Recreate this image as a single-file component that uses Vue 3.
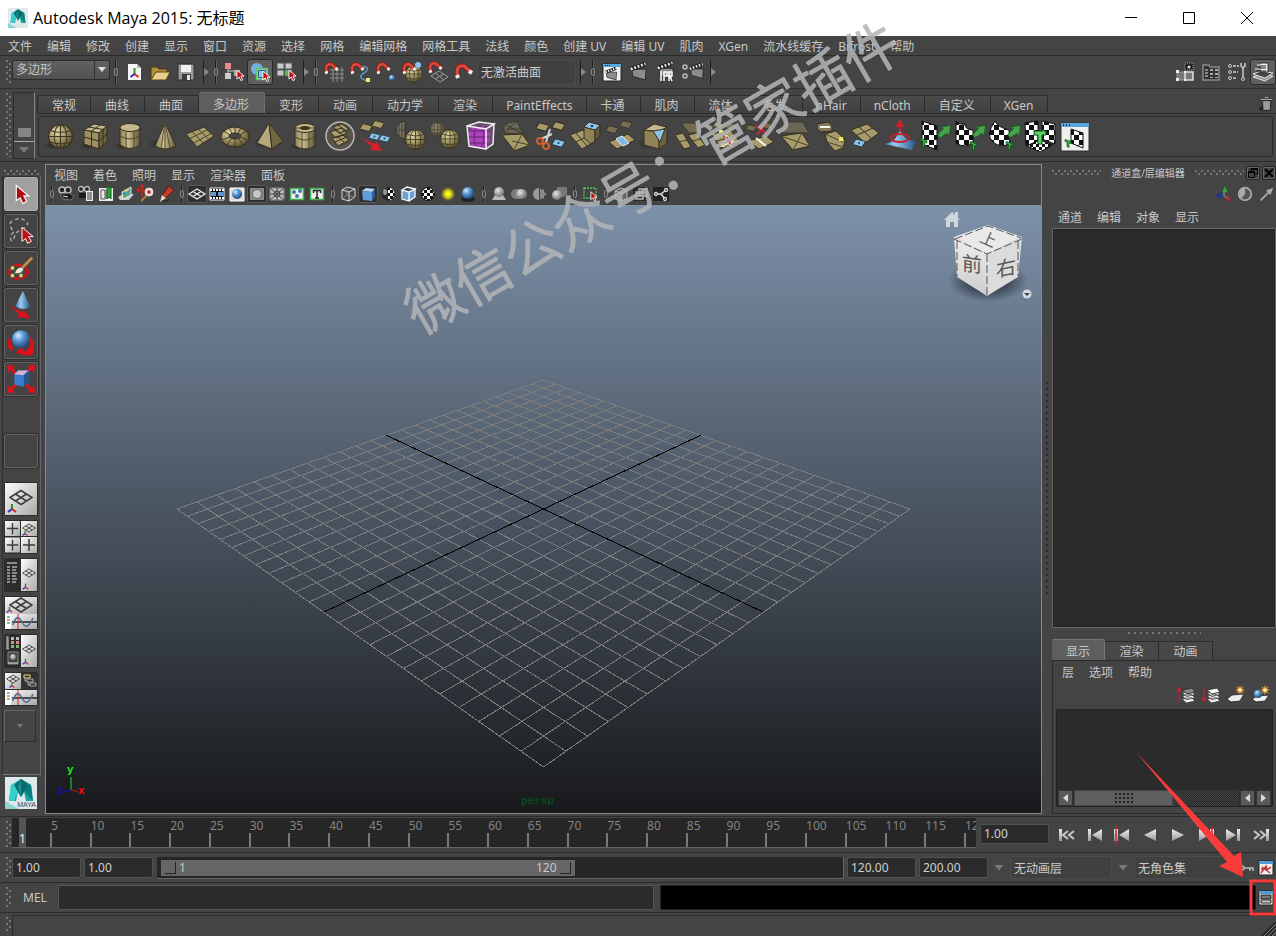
<script setup>
import { ref } from 'vue'

const mainMenu = ['文件', '编辑', '修改', '创建', '显示', '窗口', '资源', '选择', '网格', '编辑网格', '网格工具', '法线', '颜色', '创建 UV', '编辑 UV', '肌肉', 'XGen', '流水线缓存', 'Bifrost', '帮助']
const shelfTabs = ['常规', '曲线', '曲面', '多边形', '变形', '动画', '动力学', '渲染', 'PaintEffects', '卡通', '肌肉', '流体', '毛发', 'nHair', 'nCloth', '自定义', 'XGen']
const isLatin = (s) => /^[A-Za-z]+$/.test(s)
const activeShelf = ref('多边形')
const shelfIcons = ['sphere', 'cube', 'cylinder', 'cone', 'plane', 'torus', 'pyramid', 'pipe', 'combine', 'extract', 'half', 'mirror', 'smooth', 'fold', 'scissors', 'extrude', 'bridge', 'fill', 'append', 'split', 'collapse', 'triangulate', 'bevel', 'merge', 'sculpt', 'uvplanar', 'uvcyl', 'uvsph', 'uvauto', 'uvedit']

const statusGroups = [
  { kind: 'sep' },
  { kind: 'icons', list: ['new', 'open', 'save'] },
  { kind: 'more' }, { kind: 'sep' },
  { kind: 'icons', list: ['selhier', 'selobj', 'selcomp'], active: 'selobj' },
  { kind: 'more' }, { kind: 'sep' },
  { kind: 'icons', list: ['snapgrid', 'snapcurve', 'snappoint', 'snapproj', 'snapplane', 'magnet'] },
  { kind: 'field' },
  { kind: 'more' }, { kind: 'sep' },
  { kind: 'icons', list: ['renderview', 'clap', 'ipr', 'rset'], wide: true },
  { kind: 'more' }
]
const rightToggles = ['modelkit', 'attred', 'toolset', 'chanbox']

const tools = ['t-select', 't-lasso', 't-paint', 't-move', 't-rotate', 't-scale']
const layouts = ['l-single', 'l-four', 'l-outliner', 'l-graph', 'l-hyper', 'l-multi']

const panelMenu = ['视图', '着色', '照明', '显示', '渲染器', '面板']
const panelGroups = [
  ['p-cam', 'p-camattr', 'p-book', 'p-image', 'p-zoom', 'p-pencil'],
  ['p-grid', 'p-film', 'p-res', 'p-gate', 'p-chart', 'p-action', 'p-title'],
  ['p-wire', 'p-shade', 'p-tex', 'p-wos', 'p-check', 'p-light', 'p-ball'],
  ['p-shadow', 'p-blur', 'p-occ', 'p-aa'],
  ['p-isolate'],
  ['p-xray', 'p-xbox', 'p-joint']
]
const panelActive = ['p-grid', 'p-gate', 'p-shade']

const channelMenu = ['通道', '编辑', '对象', '显示']
const layerTabs = ['显示', '渲染', '动画']
const activeLayer = ref('显示')
const layerMenu = ['层', '选项', '帮助']
const layerIcons = ['y-up', 'y-down', 'y-new', 'y-newsel']

const frames = Array.from({ length: 24 }, (_, i) => (i + 1) * 5)
const playIcons = ['k-start', 'k-prev', 'k-prevkey', 'k-back', 'k-play', 'k-nextkey', 'k-next', 'k-end']

const mode = ref('多边形')
const current = ref('1.00')
const animStart = ref('1.00')
const playStart = ref('1.00')
const playEnd = ref('120.00')
const animEnd = ref('200.00')
const surface = ref('无激活曲面')
const animLayer = ref('无动画层')
const charSet = ref('无角色集')
const command = ref('')

/* Ground grid: project a point of the unit square to the view plane. */
function project(x, z) {
  const w = 1 - (x + z) / 6
  return [497.5 + (183.25 * (x - z)) / w, -212 + 516 / w]
}
function line(x1, z1, x2, z2) {
  const a = project(x1, z1)
  const b = project(x2, z2)
  return `M${a[0].toFixed(1)} ${a[1].toFixed(1)}L${b[0].toFixed(1)} ${b[1].toFixed(1)}`
}
const divisions = 24
let gridPath = ''
for (let i = 0; i <= divisions; i++) {
  const v = (2 * i) / divisions - 1
  if (i !== divisions / 2) gridPath += line(v, -1, v, 1) + line(-1, v, 1, v)
}
const axisPath = line(0, -1, 0, 1) + line(-1, 0, 1, 0)
</script>

<template>
  <div class="app">
    <svg class="defs" width="0" height="0" aria-hidden="true">
      <defs>
        <radialGradient id="gk" cx=".35" cy=".3" r=".8"><stop offset="0" stop-color="#e6dcb0" /><stop offset=".5" stop-color="#9d9061" /><stop offset="1" stop-color="#4b4326" /></radialGradient>
        <linearGradient id="gl" x1="0" x2="1"><stop offset="0" stop-color="#8a7f52" /><stop offset=".4" stop-color="#c9be90" /><stop offset="1" stop-color="#5f5534" /></linearGradient>
        <radialGradient id="gb" cx=".35" cy=".3" r=".75"><stop offset="0" stop-color="#d5ecff" /><stop offset=".4" stop-color="#5c9ad4" /><stop offset="1" stop-color="#1c3f70" /></radialGradient>
        <linearGradient id="gbl" x1="0" x2="1"><stop offset="0" stop-color="#3b76b4" /><stop offset=".35" stop-color="#9ccbf0" /><stop offset="1" stop-color="#225488" /></linearGradient>
        <radialGradient id="gw" cx=".4" cy=".35" r=".7"><stop offset="0" stop-color="#e4e4e4" /><stop offset="1" stop-color="#6c6c6c" /></radialGradient>
        <radialGradient id="gy"><stop offset=".15" stop-color="#ffff20" /><stop offset=".55" stop-color="#b8b21c" /><stop offset="1" stop-color="#444444" stop-opacity="0" /></radialGradient>
        <radialGradient id="gs"><stop offset="0" stop-color="#202020" stop-opacity=".8" /><stop offset="1" stop-color="#202020" stop-opacity="0" /></radialGradient>
        <linearGradient id="gp" x1="0" y1="0" x2="1" y2="1"><stop offset="0" stop-color="#fdfdfd" /><stop offset="1" stop-color="#a9a9a9" /></linearGradient>
        <linearGradient id="gplay" x1="0" y1="0" x2="0" y2="1"><stop offset="0" stop-color="#eeeeee" /><stop offset="1" stop-color="#999999" /></linearGradient>
        <pattern id="chk" width="10" height="10" patternUnits="userSpaceOnUse"><rect width="10" height="10" fill="#fff" /><path d="M0 0h5v5H0zM5 5h5v5H5z" fill="#111" /></pattern>
        <pattern id="chks" width="6" height="6" patternUnits="userSpaceOnUse"><rect width="6" height="6" fill="#fff" /><path d="M0 0h3v3H0zM3 3h3v3H3z" fill="#111" /></pattern>
      </defs>

      <symbol id="cursor" viewBox="0 0 10 14"><path d="M1 1v10l2.500-2.300 2 4 2-1-2-4H9z" fill="#c01018" stroke="#fff" stroke-width="1" /></symbol>
      <symbol id="ball" viewBox="0 0 24 24"><circle cx="12" cy="12" r="11.300" fill="url(#gk)" stroke="#352f1c" /><path d="M12 1v22M1 12h22M3 6.500q9 3 18 0M3 17.500q9 3 18 0" fill="none" stroke="#3e3720" /><ellipse cx="12" cy="12" rx="6" ry="11" fill="none" stroke="#3e3720" /></symbol>
      <symbol id="tile" viewBox="0 0 14 9"><path d="M4 .5 13.500 3 10 8.500.5 6z" fill="#a79b6c" stroke="#38321e" /></symbol>
      <symbol id="dimtile" viewBox="0 0 14 9"><path d="M4 .5 13.500 3 10 8.500.5 6z" fill="#776f52" stroke="#38342a" /></symbol>
      <symbol id="bluetile" viewBox="0 0 14 9"><path d="M4 .5 13.500 3 10 8.500.5 6z" fill="#8fc3e6" stroke="#283c48" /><circle cx="7" cy="4.500" r="1" fill="#174060" /></symbol>

      <!-- Shelf -->
      <symbol id="s-sphere" viewBox="0 0 32 32"><ellipse cx="10" cy="25" rx="10" ry="5" fill="url(#gs)" /><use href="#ball" x="4" y="4" width="25" height="25" /></symbol>
      <symbol id="s-cube" viewBox="0 0 32 32"><ellipse cx="9" cy="25" rx="9" ry="5" fill="url(#gs)" /><g stroke="#352f1c"><path d="M5 10 15 4l13 2-8 7z" fill="#c3b98d" /><path d="M5 10l15 3v16L5 24z" fill="#9c9062" /><path d="M20 13l8-7v16l-8 7z" fill="#6d6340" /><path d="M12.500 11.500V26M5 17l15 4 8-7M10 7l14 2.500V26M21 5l-9 6.500" fill="none" /></g></symbol>
      <symbol id="s-cylinder" viewBox="0 0 32 32"><ellipse cx="9" cy="26" rx="9" ry="4" fill="url(#gs)" /><path d="M6 8v17q10 7 20 0V8z" fill="url(#gl)" stroke="#352f1c" /><ellipse cx="16" cy="7.500" rx="10" ry="4" fill="#c3b98d" stroke="#352f1c" /><path d="M6 16q10 6 20 0M12 12v17M20 12v17" fill="none" stroke="#4d4427" /></symbol>
      <symbol id="s-cone" viewBox="0 0 32 32"><ellipse cx="9" cy="24" rx="10" ry="5" fill="url(#gs)" /><path d="M16 3 6 26q10 6 21 0z" fill="url(#gl)" stroke="#352f1c" /><path d="M16 3l-4 25M16 3l5 25M16 3v26" stroke="#5a5030" /></symbol>
      <symbol id="s-plane" viewBox="0 0 32 32"><path d="M2 14 20 7l10 9-17 11z" fill="#a79b6c" stroke="#352f1c" /><path d="M8 11.500 19 23M14 9l11 10.500M6 18.500 23 10M10 23l17-9.500" stroke="#4b4328" fill="none" /></symbol>
      <symbol id="s-torus" viewBox="0 0 32 32"><path fill-rule="evenodd" d="M2 17a14 10 0 1 0 28 0 14 10 0 1 0-28 0M10 16a6 3 0 1 0 12 0 6 3 0 1 0-12 0" fill="url(#gk)" stroke="#352f1c" /><path d="M5 11l6 4M27 11l-6 4M16 7v6M16 19v8M3 20l8-3M29 20l-8-3M8 25l4-6M24 25l-4-6M10 8l3 5M22 8l-3 5" stroke="#453d23" /></symbol>
      <symbol id="s-pyramid" viewBox="0 0 32 32"><ellipse cx="8" cy="23" rx="9" ry="5" fill="url(#gs)" /><path d="M15 3 3 23l15 6z" fill="#b5aa7c" stroke="#352f1c" /><path d="M15 3l3 26 11-8z" fill="#71663f" stroke="#352f1c" /></symbol>
      <symbol id="s-pipe" viewBox="0 0 32 32"><ellipse cx="9" cy="26" rx="9" ry="4" fill="url(#gs)" /><path d="M6 8v18q10 6 20 0V8z" fill="url(#gl)" stroke="#352f1c" /><ellipse cx="16" cy="8" rx="10" ry="4.500" fill="#c3b98d" stroke="#352f1c" /><ellipse cx="16" cy="8" rx="5" ry="2" fill="#3c3520" /><path d="M6 17q10 6 20 0M13 12v17M20 12v17M6 8h5M21 8h5" fill="none" stroke="#4d4427" /></symbol>
      <symbol id="s-combine" viewBox="0 0 32 32"><circle cx="16" cy="16" r="14" fill="#57534a" stroke="#b5b5b5" stroke-width="1.500" /><g fill="#a79b6c" stroke="#352f1c"><path d="M8 18l11-3 6 5-11 6zM6 12l11-4 6 5-11 5zM9 7l9-3 7 5-9 4z" /><path d="M13 16l7 6M11 10l8 5M14 5l7 5M11 22l12-5" fill="none" /></g></symbol>
      <symbol id="s-extract" viewBox="0 0 32 32"><use href="#tile" x="0" y="3" width="14" height="9" /><use href="#tile" x="12" y="0" width="14" height="9" /><use href="#bluetile" x="9" y="12" width="13" height="9" /><use href="#bluetile" x="19" y="14" width="13" height="9" /><path d="M3 18l13 6 2-3 5 10-12-1 2-3z" fill="#d3202c" /></symbol>
      <symbol id="s-half" viewBox="0 0 32 32"><path d="M11 1a9 9 0 0 0 0 18z" fill="#77715c" stroke="#35322a" /><path d="M2 10h9M5 3v14M8 2v16" stroke="#47443a" /><use href="#ball" x="11" y="9" width="21" height="21" /></symbol>
      <symbol id="s-mirror" viewBox="0 0 32 32"><g opacity=".55"><use href="#ball" x="1" y="2" width="15" height="15" /></g><use href="#ball" x="11" y="9" width="20" height="20" /></symbol>
      <symbol id="s-smooth" viewBox="0 0 32 32"><circle cx="15" cy="17" r="11" fill="#a22bb0" /><ellipse cx="15" cy="17" rx="5" ry="11" fill="none" stroke="#3b0c44" /><path d="M4 17h22M5 11h20M6 23h18" stroke="#3b0c44" /><path d="M3 6l12-4 15 2-8 5zM3 6l19 3v20L5 26zM22 9l8-5-1 20-7 5" fill="#d080e0" fill-opacity=".25" stroke="#f2eaf5" stroke-width="1.500" /></symbol>
      <symbol id="s-fold" viewBox="0 0 32 32"><path d="M5 4l13-3 6 13-19-1z" fill="#6b6757" stroke="#3b382e" /><path d="M5 4l19 10M18 1 5 13M8 9h13" stroke="#3b382e" /><path d="M3 15l20-1 8 11-16 6z" fill="#a79b6c" stroke="#352f1c" /><path d="M3 15l12 15 8-16M31 25l-18-4" stroke="#4b4328" fill="none" /></symbol>
      <symbol id="s-scissors" viewBox="0 0 32 32"><use href="#tile" x="1" y="2" width="15" height="10" /><use href="#tile" x="17" y="1" width="15" height="10" /><use href="#bluetile" x="17" y="17" width="15" height="12" /><path d="M16 9l-4 13M7 19l11-5" stroke="#d5d5d5" stroke-width="2" /><circle cx="6" cy="21" r="3" fill="none" stroke="#d0602c" stroke-width="2" /><circle cx="12" cy="26" r="3" fill="none" stroke="#d0602c" stroke-width="2" /></symbol>
      <symbol id="s-extrude" viewBox="0 0 32 32"><g stroke="#352f1c"><path d="M1 15l13-5 11 12-12 7z" fill="#a79b6c" /><path d="M7 13l11 13M7 22l12-6" /><path d="M15 7l11 3v11l-4 3-7-6z" fill="#8f8357" /><path d="M26 10l5-5v11l-5 5z" fill="#655b39" /><path d="M15 7l5-5 11 3-5 5z" fill="#8fc3e6" /></g><circle cx="23" cy="6" r="1.300" fill="#174060" /></symbol>
      <symbol id="s-bridge" viewBox="0 0 32 32"><use href="#dimtile" x="1" y="5" width="14" height="9" /><use href="#dimtile" x="15" y="0" width="14" height="9" /><path d="M5 22l19-8 7 6-18 9z" fill="#a79b6c" stroke="#352f1c" /><path d="M12 19l6-3 7 7-6 3z" fill="#7fb9e0" stroke="#e8f4fb" /></symbol>
      <symbol id="s-fill" viewBox="0 0 32 32"><ellipse cx="8" cy="24" rx="9" ry="5" fill="url(#gs)" /><g stroke="#352f1c"><path d="M5 10l10-6 13 3-8 5z" fill="#c3b98d" /><path d="M5 10l15 2v17L5 25z" fill="#8f8357" /><path d="M20 12l8-5v16l-8 6z" fill="#6d6340" /><path d="M14 11l12-2-5 13z" fill="#8fc3e6" /></g></symbol>
      <symbol id="s-append" viewBox="0 0 32 32"><path d="M7 3h14l8 10H15z" fill="#746c50" stroke="#3a372d" /><path d="M1 15l8-2 8 14-7 2zM14 15l8-2 9 12-7 3z" fill="#a79b6c" stroke="#352f1c" /><path d="M5 22l8-2M18 21l9-2" stroke="#4b4328" /></symbol>
      <symbol id="s-split" viewBox="0 0 32 32"><use href="#dimtile" x="2" y="1" width="14" height="9" /><use href="#dimtile" x="16" y="2" width="14" height="9" /><path d="M2 14l19-4 10 12-18 6z" fill="#a79b6c" stroke="#352f1c" /><path d="M12 12l9 13M7 21l20-5" stroke="#4b4328" /><path d="M10 10h4v3h-4zM12 24h4v3h-4z" fill="#f1ea78" /><use href="#cursor" x="16" y="14" width="10" height="14" /></symbol>
      <symbol id="s-collapse" viewBox="0 0 32 32"><use href="#dimtile" x="1" y="4" width="12" height="8" /><use href="#dimtile" x="18" y="2" width="12" height="8" /><path d="M4 21l18-5 8 6-15 7z" fill="#a79b6c" stroke="#352f1c" /><path d="M12 18l10 8" stroke="#f4f4ee" stroke-width="2" /><path d="M11 5l12 9M22 3l-9 12" stroke="#cc2630" stroke-width="2" /></symbol>
      <symbol id="s-triangulate" viewBox="0 0 32 32"><path d="M8 2h16l6 11H2z" fill="#6b6757" stroke="#3b382e" /><path d="M2 16l21-3 8 13-17 4z" fill="#a79b6c" stroke="#352f1c" /><path d="M2 16l29 10M23 13l-9 17" stroke="#4b4328" /></symbol>
      <symbol id="s-bevel" viewBox="0 0 32 32"><path d="M3 4l11-2 4 3v6L7 12 3 9z" fill="#817753" stroke="#352f1c" /><path d="M6 7h10" stroke="#f4f4f0" stroke-width="2" /><path d="M11 14l11-3 9 9-2 8-8 3-8-9z" fill="#a79b6c" stroke="#352f1c" /><path d="M11 14l18 8M13 22l16 5" stroke="#4b4328" /><path d="M25 17h4v4h-4z" fill="#f1ea50" /></symbol>
      <symbol id="s-merge" viewBox="0 0 32 32"><path d="M2 10l16-6 12 9-14 10z" fill="#a79b6c" stroke="#352f1c" /><path d="M10 7l12 11M8 15l16-7" stroke="#352f1c" /><use href="#bluetile" x="3" y="18" width="14" height="10" /></symbol>
      <symbol id="s-sculpt" viewBox="0 0 32 32"><path d="M0 24q12-1 16-15 4 13 16 12l-4 9z" fill="url(#gbl)" /><ellipse cx="16" cy="18" rx="9" ry="4" fill="none" stroke="#c8202c" stroke-width="2" /><path d="M16 12V4M13 6l3-5 3 5z" stroke="#c8202c" stroke-width="2" fill="#c8202c" /></symbol>
      <symbol id="gt" viewBox="0 0 8 10"><path d="M1 1l6 2v2L5 4.500V9L3 8V3.500L1 3z" fill="#30b440" stroke="#0d4a17" stroke-width=".7" /></symbol>
      <symbol id="ga" viewBox="0 0 12 12"><path d="M1 9l5-5-3-1 9-2-1 9-2-2-6 4z" fill="#43a44c" stroke="#1a5a22" stroke-width=".7" /></symbol>
      <symbol id="s-uvplanar" viewBox="0 0 32 32"><path d="M3 1l15 5v24L3 24z" fill="url(#chk)" stroke="#111" /><use href="#ga" x="17" y="4" width="15" height="14" /><use href="#gt" x="0" y="17" width="9" height="12" /></symbol>
      <symbol id="s-uvcyl" viewBox="0 0 32 32"><path d="M2 1q3 4 9 3 0 6 8 6v13q-8 6-17 0z" fill="url(#chk)" stroke="#111" /><use href="#ga" x="17" y="4" width="15" height="14" /><use href="#gt" x="15" y="20" width="9" height="12" /></symbol>
      <symbol id="s-uvsph" viewBox="0 0 32 32"><path d="M6 1q2 6 14 9l1 13q-9 6-17-1T6 1z" fill="url(#chk)" stroke="#111" /><use href="#ga" x="17" y="4" width="15" height="14" /><use href="#gt" x="16" y="20" width="9" height="12" /></symbol>
      <symbol id="s-uvauto" viewBox="0 0 32 32"><path d="M1 3l13-2v20L2 26zM18 1l13 3v20l-13-5z" fill="url(#chk)" stroke="#111" /><path d="M3 26l13-6 13 5-13 7z" fill="url(#chks)" stroke="#111" /><path d="M10 11l12 0v4h-4v9h-4v-9h-4z" fill="#5bd468" stroke="#0d4a17" /></symbol>
      <symbol id="s-uvedit" viewBox="0 0 32 32"><path d="M2 3h28v28H2z" fill="#efefef" stroke="#2c2c2c" /><path d="M2 3h28v4H2z" fill="#5aa7dc" /><path d="M4 5h1M7 5h1M10 5h1" stroke="#124" stroke-width="1.500" /><path d="M12 9l12 4v15l-12-5z" fill="url(#chk)" stroke="#111" /><use href="#gt" x="5" y="18" width="8" height="11" /></symbol>

      <!-- Status line -->
      <symbol id="i-new" viewBox="0 0 24 24"><path d="M6 4h9l4 4v12H6z" fill="#f4f4f4" /><path d="M15 4v4h4z" fill="#bbb" /><path d="M12.500 14V8" stroke="#1b9a2f" stroke-width="2" /><path d="M12.500 14l-4 3" stroke="#2233c8" stroke-width="2" /><path d="M12.500 14l4 3" stroke="#d22" stroke-width="2" /></symbol>
      <symbol id="i-open" viewBox="0 0 24 24"><path d="M3 7h6l2 2h8v4H8l-5 7z" fill="#b48d3d" stroke="#4a3712" /><path d="M8 12h14l-4 8H3z" fill="#e7cf88" stroke="#5d4719" /></symbol>
      <symbol id="i-save" viewBox="0 0 24 24"><path d="M4 4h15l1 1v15H4z" fill="#9b9b9b" stroke="#2f2f2f" /><path d="M7 5h10v7H7z" fill="#f0f0f0" /><path d="M8 14h9v6H8z" fill="#3d3d3d" /><path d="M13 15h3v5h-3z" fill="#e6e6e6" /></symbol>
      <symbol id="i-selhier" viewBox="0 0 24 24"><path d="M3 3h6v6H3z" fill="#e88" /><path d="M3 13h6v6H3z" fill="#ccc" /><path d="M12 10h6v6h-6z" fill="#aaa" /><path d="M6 9v4M6 11h6" stroke="#ccc" /><use href="#cursor" x="14" y="9" width="9" height="13" /></symbol>
      <symbol id="i-selobj" viewBox="0 0 24 24"><circle cx="9" cy="9" r="6" fill="#73b0dd" /><path d="M8.500 8.500h11v11h-11z" fill="#8fc4e8" stroke="#62c462" stroke-width="1.500" /><path d="M10.500 10.500h7v7h-7z" fill="none" stroke="#315f86" /><use href="#cursor" x="14" y="10" width="9" height="13" /></symbol>
      <symbol id="i-selcomp" viewBox="0 0 24 24"><path d="M3 3h7v6H3zM11 3h7v6h-7zM3 10h7v6H3z" fill="#c8c8c8" stroke="#555" /><path d="M11 10h7v6h-7z" fill="#54b95a" /><use href="#cursor" x="14" y="9" width="9" height="13" /></symbol>
      <symbol id="mag" viewBox="0 0 18 18"><path d="M3 14 2 9Q2 2 9 3l7 6" fill="none" stroke="#8d1712" stroke-width="5" /><path d="M3 14 2 9Q2 2 9 3l7 6" fill="none" stroke="#e04a3c" stroke-width="3" /><path d="M2 12l1 3M14 8l3 2" stroke="#eee" stroke-width="4" /></symbol>
      <symbol id="i-snapgrid" viewBox="0 0 24 24"><path d="M8 10h14M8 14h14M8 18h14M11 7v15M15 7v15M20 7v15" stroke="#8c8c8c" /><use href="#mag" x="2" y="2" width="15" height="14" /></symbol>
      <symbol id="i-snapcurve" viewBox="0 0 24 24"><path d="M14 6q10 2 2 7t4 8" fill="none" stroke="#5e96c8" stroke-width="1.500" /><path d="M18 18h4v4h-4z" fill="#f1ea78" /><use href="#mag" x="2" y="2" width="15" height="14" /></symbol>
      <symbol id="i-snappoint" viewBox="0 0 24 24"><circle cx="18" cy="18" r="3" fill="url(#gb)" /><use href="#mag" x="2" y="2" width="15" height="14" /></symbol>
      <symbol id="i-snapproj" viewBox="0 0 24 24"><use href="#ball" x="5" y="5" width="18" height="18" /><use href="#mag" x="2" y="2" width="15" height="14" /><circle cx="18" cy="5" r="3" fill="#8ac4ee" /></symbol>
      <symbol id="i-snapplane" viewBox="0 0 24 24"><path d="M5 16l8-5 9 6-8 5zM9 13l9 7M9 19l9-5" fill="none" stroke="#9a9a9a" /><use href="#mag" x="2" y="1" width="15" height="14" /></symbol>
      <symbol id="i-magnet" viewBox="0 0 24 24"><use href="#mag" x="3" y="3" width="18" height="18" /></symbol>
      <symbol id="clapper" viewBox="0 0 20 20"><path d="M2 8h16l-1 12-14-4z" fill="#8b8b8b" stroke="#222" /><path d="M1 8 17 2" stroke="#222" stroke-width="5" /><path d="M1 8 17 2" stroke="#eee" stroke-width="3" stroke-dasharray="2 2" /></symbol>
      <symbol id="i-renderview" viewBox="0 0 24 24"><path d="M3 4h18v17H3z" fill="#f0f0f0" stroke="#222" /><path d="M3 4h18v3H3z" fill="#5aa7dc" /><path d="M5 5.500h5" stroke="#124" stroke-dasharray="1 1" /><use href="#clapper" x="5" y="7" width="13" height="13" /></symbol>
      <symbol id="i-clap" viewBox="0 0 24 24"><use href="#clapper" x="3" y="1" width="18" height="20" /></symbol>
      <symbol id="i-ipr" viewBox="0 0 24 24"><use href="#clapper" x="3" y="0" width="18" height="20" /><path d="M7 11v10M10 21v-9h3v4h-3M15 21v-9h3v4h-2l2 5" fill="none" stroke="#fff" stroke-width="1.500" /></symbol>
      <symbol id="i-rset" viewBox="0 0 24 24"><use href="#clapper" x="8" y="1" width="16" height="19" /><circle cx="4" cy="7" r="2" fill="none" stroke="#bbb" stroke-width="1.500" /><circle cx="4" cy="16" r="2" fill="none" stroke="#bbb" stroke-width="1.500" /></symbol>
      <symbol id="i-modelkit" viewBox="0 0 24 24"><path d="M12 3h8v7h-8z" fill="#222" stroke="#999" stroke-dasharray="1 1" /><circle cx="16" cy="7" r="1.500" fill="#ddd" /><path d="M4 12h8v8H4z" fill="#777" stroke="#999" /><path d="M12 12h8v8h-8z" fill="#777" stroke="#ddd" stroke-width="1.500" /><path d="M3 10h3v3H3zM3 18h3v3H3zM11 11h2v2h-2zM11 19h2v2h-2z" fill="#eee" /></symbol>
      <symbol id="i-attred" viewBox="0 0 24 24"><path d="M4 5h6l1 2h9v13H4z" fill="#333" stroke="#8a8a8a" stroke-width="1.500" /><path d="M6 10h3M6 13h3M6 16h3" stroke="#ddd" /><path d="M11 9h3v2h-3zM16 9h3v2h-3zM11 13h3v2h-3zM16 13h3v2h-3zM11 17h3v1h-3zM16 17h3v1h-3z" fill="#aaa" /></symbol>
      <symbol id="i-toolset" viewBox="0 0 24 24"><g fill="none" stroke="#ccc"><circle cx="5" cy="6" r="1.500" /><circle cx="5" cy="12" r="1.500" /><circle cx="5" cy="18" r="1.500" /><path d="M8 6h6M8 12h5M8 18h4" stroke-width="1.500" stroke-dasharray="3 1" /><path d="M18 8v10M16 3v3l2 2 2-2V3" stroke-width="1.500" /><circle cx="18" cy="19" r="1.500" /></g></symbol>
      <symbol id="i-chanbox" viewBox="0 0 24 24"><path d="M2 17l8-3 12 2-8 5z" fill="#999" stroke="#ddd" /><path d="M2 14l8-3 12 2-8 5z" fill="#444" stroke="#ddd" /><path d="M9 3h8v9H9z" fill="#eee" stroke="#333" /><path d="M8 6h7M6 8h9M5 11h10" stroke="#222" /><path d="M6 5h4M4 9h5" stroke="#fff" /></symbol>

      <!-- Toolbox -->
      <symbol id="t-select" viewBox="0 0 34 34"><path d="M12 8v16l4-3 3 6 4-2-3-6h5z" fill="#b00c14" stroke="#fff" stroke-width="1.200" /></symbol>
      <symbol id="t-lasso" viewBox="0 0 34 34"><path d="M8 16Q3 9 8 6q8-4 14 0 5 4-2 8-10 4-10 10-2 6-4 2 0-6 4-8" fill="none" stroke="#a8a8a8" stroke-width="1.500" stroke-dasharray="4 3" /><path d="M18 13v15l4-3 2 5 4-2-3-5h5z" fill="#c01018" stroke="#fff" /></symbol>
      <symbol id="t-paint" viewBox="0 0 34 34"><ellipse cx="14" cy="21" rx="10" ry="7" fill="none" stroke="#c8141c" stroke-width="3" /><path d="M17 18 29 6" stroke="#7b5730" stroke-width="4" /><path d="M18 17 29 6" stroke="#c99a5a" stroke-width="2" /><path d="M10 23q2-7 8-7l2 2q-2 6-10 5z" fill="#efe9d2" stroke="#555" /><path d="M6 15h4v4H6zM6 23h4v4H6zM15 23h4v4h-4z" fill="#f1ea78" stroke="#554" /></symbol>
      <symbol id="t-move" viewBox="0 0 34 34"><path d="M19 2 11 18q7 6 16 1z" fill="url(#gbl)" /><path d="M4 16l14 9 2-3 7 9-14-1 2-3z" fill="#dd1018" /></symbol>
      <symbol id="t-rotate" viewBox="0 0 34 34"><path d="M6 14q-4 7 2 11M26 13q7 8-2 13" fill="none" stroke="#d81018" stroke-width="4" /><circle cx="17" cy="14" r="9.500" fill="url(#gb)" /><path d="M26 24q-3 3-7 3v-4l-8 5 9 3h8q3-2 3-7z" fill="#e41018" /></symbol>
      <symbol id="t-scale" viewBox="0 0 34 34"><path d="M6 5l22 24M28 5 6 29" stroke="#e01018" stroke-width="3" /><path d="M2 2l9 1-3 2-3 3-2 3zM32 2l-1 9-2-3-3-3-3-2zM2 32l1-9 2 3 3 3 3 2zM32 32l-9-1 3-2 3-3 2-3z" fill="#e01018" /><path d="M10 12l4-4h11v12l-5 5-10-2z" fill="#3b7ed0" /><path d="M10 12l4-4h11l-5 5z" fill="#d3b3cf" /><path d="M20 13l5-5v12l-5 5z" fill="#23528e" /></symbol>
      <symbol id="gridic" viewBox="0 0 24 16"><path d="M1 8l11-7 11 7-11 7zM6.500 4.500l11 7M17.500 4.500l-11 7" fill="none" stroke="#3d3d3d" stroke-width="1.500" /></symbol>
      <symbol id="tri" viewBox="0 0 10 10"><path d="M5 6V1" stroke="#1b8f2c" stroke-width="2" /><path d="M5 6 1 9" stroke="#2233c8" stroke-width="2" /><path d="M5 6l4 3" stroke="#d22" stroke-width="2" /></symbol>
      <symbol id="plus" viewBox="0 0 16 16"><path d="M0 0h16v16H0z" fill="url(#gp)" /><path d="M8 2v12M2 8h12" stroke="#3a3a3a" stroke-width="1.500" /></symbol>
      <symbol id="curve" viewBox="0 0 32 15"><path d="M0 0h32v15H0z" fill="url(#gp)" /><path d="M0 0h6v15H0z" fill="#fff" /><path d="M2 3h3" stroke="#1a7a2a" /><path d="M2 6h3" stroke="#c22" /><path d="M2 9h3" stroke="#1a7a2a" /><path d="M7 8h25" stroke="#222" stroke-width="1.500" /><path d="M8 11Q12-2 17 8t11-4" fill="none" stroke="#4a6c96" stroke-width="1.500" /><path d="M13 0v15" stroke="#d22" /></symbol>
      <symbol id="l-single" viewBox="0 0 34 34"><path d="M1 1h32v32H1z" fill="url(#gp)" /><use href="#gridic" x="5" y="7" width="24" height="17" /><use href="#tri" x="3" y="21" width="10" height="10" /></symbol>
      <symbol id="l-four" viewBox="0 0 34 34"><use href="#plus" x="1" y="1" width="15" height="15" /><path d="M17 1h16v15H17z" fill="url(#gp)" /><use href="#gridic" x="18" y="3" width="14" height="10" /><use href="#tri" x="18" y="10" width="6" height="6" /><use href="#plus" x="1" y="17" width="15" height="16" /><use href="#plus" x="17" y="17" width="16" height="16" /></symbol>
      <symbol id="l-outliner" viewBox="0 0 34 34"><path d="M1 1h16v32H1z" fill="#2c2c2c" /><path d="M17 1h16v32H17z" fill="url(#gp)" /><path d="M3 5h10M3 9h3M3 12h3M3 15h3M3 18h3M3 21h3M3 24h3M8 9h5M8 12h4M8 15h5M8 18h4M8 21h5M8 24h4" stroke="#eee" /><use href="#gridic" x="18" y="10" width="14" height="10" /><use href="#tri" x="18" y="25" width="7" height="7" /></symbol>
      <symbol id="l-graph" viewBox="0 0 34 34"><path d="M1 1h32v17H1z" fill="url(#gp)" /><use href="#gridic" x="5" y="1" width="24" height="16" /><use href="#tri" x="2" y="10" width="7" height="7" /><use href="#curve" x="1" y="18" width="32" height="15" /></symbol>
      <symbol id="l-hyper" viewBox="0 0 34 34"><path d="M1 1h16v32H1z" fill="#2c2c2c" /><path d="M17 1h16v32H17z" fill="url(#gp)" /><path d="M2 2h3v14H2z" fill="#999" stroke="#333" stroke-dasharray="1 1" /><path d="M7 3h3v3H7zM12 3h3v3h-3z" fill="#bbb" /><path d="M7 7h3v3H7zM12 7h3v3h-3z" fill="#d88" /><path d="M7 11h3v3H7zM12 11h3v3h-3z" fill="#7b7" /><path d="M4 18h10v12H4z" fill="#444" stroke="#888" /><circle cx="9" cy="23" r="3" fill="url(#gw)" /><path d="M4 29h10" stroke="#ddd" /><use href="#gridic" x="18" y="10" width="14" height="10" /><use href="#tri" x="18" y="24" width="7" height="7" /></symbol>
      <symbol id="l-multi" viewBox="0 0 34 34"><path d="M1 1h16v16H1z" fill="url(#gp)" /><use href="#gridic" x="2" y="2" width="14" height="10" /><use href="#tri" x="5" y="10" width="6" height="6" /><path d="M17 1h16v16H17z" fill="#333" /><path d="M20 3h6v3h-6z" fill="none" stroke="#e9dc70" /><path d="M23 7h6v3h-6zM26 11h6v3h-6zM21 6v3h2M24 10v3h2" fill="none" stroke="#aaa" /><use href="#curve" x="1" y="18" width="32" height="15" /></symbol>
      <symbol id="maya" viewBox="0 0 32 32"><path d="M0 0h32v32H0z" fill="#dfe8ea" /><path d="M0 24 14 32H0z" fill="#8fd3d3" /><path d="M4 24 6 8l10-6 10 6 2 16h-7l-2-9-3 5-3-5-2 9z" fill="#1aa6a0" /><path d="M6 8l10-6-3 13-4 9H4z" fill="#35d0ca" /><path d="M16 2l10 6 2 16-7-7z" fill="#0b7f80" /><path d="M16 2 9 8l7 12 7-12z" fill="#0a6a6d" /><path d="M16 2l-3 8 3 10z" fill="#17928f" /></symbol>

      <!-- Panel toolbar -->
      <symbol id="p-cam" viewBox="0 0 20 20"><circle cx="6" cy="6" r="3" fill="#222" stroke="#bbb" stroke-width="1.500" /><circle cx="12" cy="6" r="3" fill="#222" stroke="#bbb" stroke-width="1.500" /><path d="M4 10l9-1 5 3-3 4-8-1z" fill="#1c1c1c" stroke="#777" /><path d="M7 12l5 1" stroke="#ddd" /></symbol>
      <symbol id="p-camattr" viewBox="0 0 20 20"><circle cx="5" cy="5" r="2.500" fill="#222" stroke="#bbb" stroke-width="1.300" /><circle cx="11" cy="5" r="2.500" fill="#222" stroke="#bbb" stroke-width="1.300" /><path d="M3 9h7v5H3z" fill="#1c1c1c" /><path d="M10 7h7v10h-7z" fill="#eee" /><path d="M11 9h5M11 11h5M11 13h5M11 15h5" stroke="#333" /></symbol>
      <symbol id="p-book" viewBox="0 0 20 20"><path d="M3 4h14v13H3z" fill="#ececec" /><path d="M5 6h4v9H5zM10 6v9" fill="none" stroke="#555" /><path d="M11 3h4v12l-2-2-2 2z" fill="#2fa13a" stroke="#145a1c" /></symbol>
      <symbol id="p-image" viewBox="0 0 20 20"><path d="M2 13l5-3h11l-5 6H4z" fill="#ccc" /><path d="M6 8l9-5v8l-8 4z" fill="#3e8be0" stroke="#eee" /><path d="M7 12l7-6v4l-6 4z" fill="#5ab04a" /><path d="M9 6l4-2v2l-4 3z" fill="#e2d14a" /></symbol>
      <symbol id="p-zoom" viewBox="0 0 20 20"><path d="M6 1v12M1 6h12M4 3l2-2 2 2M3 4 1 6l2 2" stroke="#c22" stroke-width="1.500" fill="none" /><path d="M11 11l-6 6" stroke="#b07c3a" stroke-width="2" /><circle cx="13" cy="8" r="4" fill="#f3dede" stroke="#ddd" /><path d="M11 8h4M13 6v4" stroke="#c22" stroke-width="1.500" /></symbol>
      <symbol id="p-pencil" viewBox="0 0 20 20"><path d="M6 11 13 2l5 4-8 8z" fill="#c43a2c" stroke="#5a140f" /><path d="M6 11l4 3-6 4z" fill="#eadcc0" /><path d="M6 17q6 1 8-2" stroke="#222" fill="none" /></symbol>
      <symbol id="p-grid" viewBox="0 0 20 20"><path d="M2 10l8-5 8 5-8 5zM6 7.500l8 5M14 7.500l-8 5" fill="none" stroke="#eee" stroke-width="1.300" /></symbol>
      <symbol id="p-film" viewBox="0 0 20 20"><path d="M3 4h14v12H3z" fill="#111" stroke="#eee" /><path d="M3 6h14M3 14h14" stroke="#fff" stroke-width="2" stroke-dasharray="2 1" /><path d="M4 8h5v4H4zM11 8h5v4h-5z" fill="#5d9bd2" /></symbol>
      <symbol id="p-res" viewBox="0 0 20 20"><path d="M3 4h14v13H3z" fill="#ddd" stroke="#fff" /><circle cx="10" cy="10" r="5" fill="url(#gb)" /></symbol>
      <symbol id="p-gate" viewBox="0 0 20 20"><path d="M3 4h14v12H3z" fill="#888" /><circle cx="10" cy="10" r="4.500" fill="#c8c8c8" stroke="#666" /></symbol>
      <symbol id="p-chart" viewBox="0 0 20 20"><path d="M3 4h14v12H3z" fill="#bbb" stroke="#888" /><path d="M3 4l14 12M17 4 3 16M10 4v12M3 10h14" stroke="#444" /><circle cx="10" cy="10" r="3" fill="none" stroke="#444" /></symbol>
      <symbol id="p-action" viewBox="0 0 20 20"><path d="M3.500 4.500h13v11h-13z" fill="#eee" stroke="#3fb14a" stroke-width="1.500" /><circle cx="7" cy="8" r="2" fill="#3d78ad" /><circle cx="13" cy="7" r="2" fill="#3d78ad" /><circle cx="10" cy="12" r="2" fill="#3d78ad" /></symbol>
      <symbol id="p-title" viewBox="0 0 20 20"><path d="M3.500 4.500h13v11h-13z" fill="#eee" stroke="#3fb14a" stroke-width="1.500" /><path d="M6.500 9V6.500h7V9M10 6v8M8 14h4" fill="none" stroke="#222" stroke-width="1.500" /></symbol>
      <symbol id="p-wire" viewBox="0 0 20 20"><path d="M4 6l5-3 8 2v8l-6 4-7-2zM4 6l7 2 6-3M11 8v9" fill="none" stroke="#ddd" /><path d="M9 3v8l-5 4M9 11l8 2" fill="none" stroke="#888" /></symbol>
      <symbol id="p-shade" viewBox="0 0 20 20"><path d="M4 7l4-3 9 1-3 3z" fill="#b7d8f2" /><path d="M4 7l10 1v9l-9-1z" fill="#5f9ddb" /><path d="M14 8l3-3v8l-3 4z" fill="#2c5f98" /></symbol>
      <symbol id="p-tex" viewBox="0 0 20 20"><circle cx="10" cy="10" r="6.500" fill="#2a2a2a" /><path d="M10 3.500a6.500 6.500 0 0 1 0 13z" fill="url(#chks)" /><ellipse cx="7" cy="8" rx="2" ry="3" fill="#999" /></symbol>
      <symbol id="p-wos" viewBox="0 0 20 20"><path d="M4 6l7 2v9l-6-2zM11 8l6-3v8l-6 4z" fill="#6aa0d8" /><path d="M4 6l5-3 8 2-6 3zM4 6l7 2v9l-7-2zM11 8l6-3v8l-6 4" fill="none" stroke="#fff" stroke-width="1.300" /></symbol>
      <symbol id="p-check" viewBox="0 0 20 20"><circle cx="10" cy="10" r="6.500" fill="url(#chks)" stroke="#111" /></symbol>
      <symbol id="p-light" viewBox="0 0 20 20"><circle cx="10" cy="10" r="8" fill="url(#gy)" /></symbol>
      <symbol id="p-ball" viewBox="0 0 20 20"><ellipse cx="10" cy="15" rx="7" ry="3" fill="#222" /><circle cx="10" cy="9" r="6" fill="url(#gb)" /></symbol>
      <symbol id="p-shadow" viewBox="0 0 20 20"><path d="M3 16l3-5h8l3 5z" fill="#bbb" /><circle cx="10" cy="8" r="5" fill="url(#gw)" /></symbol>
      <symbol id="p-blur" viewBox="0 0 20 20"><rect x="2" y="5" width="16" height="10" rx="5" fill="#7c7c7c" /><circle cx="12" cy="10" r="5" fill="url(#gw)" /></symbol>
      <symbol id="p-occ" viewBox="0 0 20 20"><path d="M10 4v12a6 6 0 0 1 0-12z" fill="#999" /><path d="M11 4l2 2 2-1v3l3 2-3 2v3l-2-1-2 2z" fill="#888" /></symbol>
      <symbol id="p-aa" viewBox="0 0 20 20"><path d="M8 3h10v8l-3 2H8z" fill="#777" /><circle cx="8" cy="11" r="5" fill="url(#gw)" /></symbol>
      <symbol id="p-isolate" viewBox="0 0 20 20"><path d="M4 4h12v10H4z" fill="none" stroke="#4ec455" stroke-width="1.300" stroke-dasharray="2 1" /><use href="#cursor" x="10" y="7" width="8" height="11" /></symbol>
      <symbol id="p-xray" viewBox="0 0 20 20"><path d="M4 7l6-3 6 2v8l-5 3-7-2zM4 7l7 2 5-3M11 9v8" fill="#666" stroke="#bbb" /></symbol>
      <symbol id="p-xbox" viewBox="0 0 20 20"><path d="M2 3h16v14H2z" fill="#2b2b2b" /><path d="M5 8h7v7H5zM8 5h8v7H8z" fill="none" stroke="#bbb" stroke-width="1.300" /></symbol>
      <symbol id="p-joint" viewBox="0 0 20 20"><path d="M2 3h16v14H2z" fill="#222" /><path d="M5 10h5l5-4M10 10l4 5" stroke="#ddd" stroke-width="1.500" fill="none" /><g fill="#222" stroke="#ddd" stroke-width="1.300"><circle cx="5" cy="10" r="1.500" /><circle cx="15" cy="6" r="1.500" /><circle cx="14" cy="15" r="1.500" /></g></symbol>

      <!-- Layer editor -->
      <symbol id="stack" viewBox="0 0 14 16"><path d="M1 12l9-1 3 3-8 2zM1 9l9-1 3 3-8 2zM1 6l9-1 3 3-8 2z" fill="#f4f4f4" stroke="#333" stroke-width=".7" /></symbol>
      <symbol id="y-up" viewBox="0 0 20 20"><path d="M3 17V5M1 6l2-4 2 4z" stroke="#c8202c" fill="#c8202c" /><use href="#stack" x="5" y="1" width="15" height="17" /><path d="M6 5l10-2 3 4-8 2z" fill="#888" stroke="#333" /></symbol>
      <symbol id="y-down" viewBox="0 0 20 20"><path d="M3 2v12M1 13l2 4 2-4z" stroke="#c8202c" fill="#c8202c" /><use href="#stack" x="5" y="1" width="15" height="17" /><path d="M6 5l10-2 3 4-8 2z" fill="#fff" stroke="#333" /></symbol>
      <symbol id="star" viewBox="0 0 10 10"><path d="M5 0l1 3 3-2-2 3 3 1-3 1 2 3-3-2-1 3-1-3-3 2 2-3-3-1 3-1-2-3 3 2z" fill="#f0a33a" /><circle cx="5" cy="5" r="1.500" fill="#fff6d0" /></symbol>
      <symbol id="y-new" viewBox="0 0 20 20"><path d="M1 14l5-4 12-1-4 7-9 1z" fill="#eee" stroke="#333" /><use href="#star" x="9" y="0" width="10" height="10" /></symbol>
      <symbol id="y-newsel" viewBox="0 0 20 20"><path d="M1 14l5-3 12-1-4 6-9 1z" fill="#eee" stroke="#333" /><circle cx="7" cy="9" r="4" fill="url(#gb)" /><use href="#star" x="9" y="0" width="10" height="10" /></symbol>

      <!-- Playback -->
      <symbol id="k-start" viewBox="0 0 20 20"><path d="M2 4h3v12H2z" fill="url(#gplay)" /><path d="M11 6l-5 4 5 4M17 6l-5 4 5 4" fill="none" stroke="#c8c8c8" stroke-width="2" /></symbol>
      <symbol id="k-prev" viewBox="0 0 20 20"><path d="M3 4h3v12H3zM17 4v12L7 10z" fill="url(#gplay)" /></symbol>
      <symbol id="k-prevkey" viewBox="0 0 20 20"><path d="M2 4h4v12H2zM17 4v12L7 10z" fill="url(#gplay)" /><path d="M4 1v18" stroke="#c8202c" stroke-width="1.500" /></symbol>
      <symbol id="k-back" viewBox="0 0 20 20"><path d="M16 4v12L4 10z" fill="url(#gplay)" /></symbol>
      <symbol id="k-play" viewBox="0 0 20 20"><path d="M4 4v12l12-6z" fill="url(#gplay)" /></symbol>
      <symbol id="k-nextkey" viewBox="0 0 20 20"><path d="M14 4h4v12h-4zM3 4v12l10-6z" fill="url(#gplay)" /><path d="M16 1v18" stroke="#c8202c" stroke-width="1.500" /></symbol>
      <symbol id="k-next" viewBox="0 0 20 20"><path d="M14 4h3v12h-3zM3 4v12l10-6z" fill="url(#gplay)" /></symbol>
      <symbol id="k-end" viewBox="0 0 20 20"><path d="M15 4h3v12h-3z" fill="url(#gplay)" /><path d="M3 6l5 4-5 4M9 6l5 4-5 4" fill="none" stroke="#c8c8c8" stroke-width="2" /></symbol>
      <symbol id="win" viewBox="0 0 16 16"><path d="M1 1h14v14H1z" fill="#f2f2f2" stroke="#222" /><path d="M1 1h14v3H1z" fill="#4f9ed8" /></symbol>
    </svg>

    <header class="titlebar">
      <svg class="title-logo"><use href="#maya" /></svg>
      <h1>Autodesk Maya 2015: 无标题</h1>
      <div class="win-buttons">
        <button type="button" aria-label="最小化"><svg viewBox="0 0 12 12"><path d="M0 5.500h12" /></svg></button>
        <button type="button" aria-label="最大化"><svg viewBox="0 0 12 12"><path d="M.5.500h11v11H.5z" /></svg></button>
        <button type="button" aria-label="关闭"><svg viewBox="0 0 12 12"><path d="M0 0l12 12M12 0 0 12" /></svg></button>
      </div>
    </header>

    <nav class="menu main-menu">
      <button v-for="m in mainMenu" :key="m" type="button">{{ m }}</button>
    </nav>

    <section class="status-line">
      <span class="grip"></span>
      <div class="mode">
        <select v-model="mode" aria-label="菜单集">
          <option>多边形</option><option>动画</option><option>曲面</option>
        </select>
      </div>
      <template v-for="(g, i) in statusGroups" :key="i">
        <span v-if="g.kind === 'sep'" class="sep"></span>
        <span v-else-if="g.kind === 'more'" class="more"></span>
        <input v-else-if="g.kind === 'field'" v-model="surface" class="flat-field surface" aria-label="激活曲面" />
        <div v-else class="icons" :class="{ wide: g.wide }">
          <button v-for="n in g.list" :key="n" type="button" :class="{ on: g.active === n }" :aria-label="n"><svg><use :href="'#i-' + n" /></svg></button>
        </div>
      </template>
      <div class="icons right">
        <button v-for="n in rightToggles" :key="n" type="button" :class="{ on: n === 'chanbox' }" :aria-label="n"><svg><use :href="'#i-' + n" /></svg></button>
      </div>
    </section>

    <section class="shelf">
      <span class="grip"></span>
      <div class="shelf-side">
        <button type="button" aria-label="工具架标签"><i class="square"></i></button>
        <button type="button" aria-label="工具架菜单"><i class="hollow-tri"></i></button>
      </div>
      <div class="shelf-main">
        <div class="tab-row">
          <button v-for="t in shelfTabs" :key="t" type="button" :class="{ on: t === activeShelf, latin: isLatin(t) }" @click="activeShelf = t">{{ t }}</button>
          <button type="button" class="trash" aria-label="删除"><svg viewBox="0 0 14 16"><ellipse cx="4" cy="13" rx="4" ry="2" fill="#222" /><path d="M3 5h9l-1 10H4z" fill="#888" stroke="#222" /><path d="M2 4h11M6 2h3M6 6v8M8 6v8M10 6v8" stroke="#aaa" /></svg></button>
        </div>
        <div class="shelf-body">
          <button v-for="n in shelfIcons" :key="n" type="button" :aria-label="n"><svg><use :href="'#s-' + n" /></svg></button>
        </div>
      </div>
    </section>

    <main class="workspace">
      <aside class="toolbox">
        <span class="hgrip"></span>
        <div class="tool-frame">
          <button v-for="t in tools" :key="t" type="button" class="tool" :class="{ on: t === 't-select' }" :aria-label="t"><svg><use :href="'#' + t" /></svg></button>
          <button type="button" class="tool last-tool" aria-label="上次使用的工具"></button>
          <button v-for="l in layouts" :key="l" type="button" class="layout" :aria-label="l"><svg><use :href="'#' + l" /></svg></button>
          <button type="button" class="layout-menu" aria-label="布局菜单"><i class="hollow-tri small"></i></button>
        </div>
        <div class="maya-badge"><svg><use href="#maya" /></svg><span>MAYA</span></div>
      </aside>

      <section class="view-panel">
        <nav class="menu panel-menu">
          <button v-for="m in panelMenu" :key="m" type="button">{{ m }}</button>
        </nav>
        <div class="panel-tools">
          <template v-for="(g, i) in panelGroups" :key="i">
            <span class="sep"></span>
            <button v-for="n in g" :key="n" type="button" :class="{ on: panelActive.includes(n) }" :aria-label="n"><svg><use :href="'#' + n" /></svg></button>
          </template>
        </div>
        <div class="viewport">
          <svg class="scene" viewBox="0 0 995 608" preserveAspectRatio="xMidYMid meet">
            <path :d="gridPath" class="grid-lines" />
            <path :d="axisPath" class="axis-lines" />
            <text x="475" y="599" class="cam-name">persp</text>
          </svg>
          <svg class="axis-mark" viewBox="0 0 34 34">
            <path d="M17 26V13" stroke="#19e619" /><path d="M17 26l7 2" stroke="#e00" /><path d="M17 26l-8 2" stroke="#11c" />
            <text x="13" y="9" fill="#19f019">y</text><text x="24" y="30" fill="#f01010">x</text><text x="3" y="30" fill="#1010d0">z</text>
          </svg>
          <svg class="view-cube" viewBox="0 0 100 100">
            <defs>
              <radialGradient id="cs"><stop offset=".5" stop-color="#28323e" stop-opacity=".7" /><stop offset="1" stop-color="#28323e" stop-opacity="0" /></radialGradient>
              <linearGradient id="cl" x1="0" y1="0" x2="0" y2="1"><stop offset="0" stop-color="#eeeeee" /><stop offset="1" stop-color="#cdcdcd" /></linearGradient>
            </defs>
            <path d="M3 15l8-8 3 3V7h3v6l2 2h-2v7h-4v-5H9v5H5v-7z" fill="#cdd5de" />
            <ellipse cx="47" cy="76" rx="40" ry="21" fill="url(#cs)" />
            <path d="M13 32 47 20l34 12-35 17z" fill="#e9e9e9" />
            <path d="M13 32l33 17v42L16 72z" fill="url(#cl)" />
            <path d="M46 49l35-17-4 40-31 19z" fill="#dcdcdc" />
            <path d="M13 34 46 49l35-15M46 49v42M14 34 47 21l33 12M16 36v35M77 36v35" fill="none" stroke="#555" stroke-dasharray="8 3" />
            <g class="cube-text">
              <text x="21" y="66" transform="skewY(8) translate(0 -4)">前</text>
              <text x="55" y="71" transform="skewY(-12) translate(0 13)">右</text>
              <text x="39" y="40" class="top-face" transform="rotate(24 47 35)">上</text>
            </g>
            <circle cx="86" cy="89" r="4.500" fill="#d3d9e0" /><path d="M83 88h6l-3 3z" fill="#444" />
          </svg>
        </div>
      </section>

      <span class="splitter"></span>

      <aside class="side">
        <div class="side-title">
          <span class="hgrip"></span><h2>通道盒/层编辑器</h2><span class="hgrip"></span>
          <button type="button" aria-label="浮动"><svg viewBox="0 0 12 12"><path d="M4 4V1.500h6.500V7H8M1.500 4.500h6v6h-6z" /><path d="M1 5h7M4 2h7" stroke-width="2" /></svg></button>
          <button type="button" aria-label="关闭面板"><svg viewBox="0 0 12 12"><path d="M2 2l8 8M10 2l-8 8" stroke-width="2" /></svg></button>
        </div>
        <div class="side-icons">
          <button type="button" aria-label="操纵器"><svg viewBox="0 0 20 20"><path d="M10 12V6" stroke="#aaa" /><path d="M11 1l3 7H8z" fill="#2fae3a" /><path d="M0 12l7-4v7z" fill="#20309c" /><path d="M10 12l4 3" stroke="#aaa" /><path d="M18 18l-6-2 3-4z" fill="#c8262c" /></svg></button>
          <button type="button" aria-label="速度"><svg viewBox="0 0 20 20"><circle cx="10" cy="10" r="7" fill="#555" stroke="#aaa" stroke-width="2" /><path d="M10 3v7l-4 5A7 7 0 0 1 10 3" fill="#aaa" /></svg></button>
          <button type="button" aria-label="曲线"><svg viewBox="0 0 20 20"><path d="M4 17 14 7" stroke="#aaa" stroke-width="2" /><path d="M18 3l-8 3 5 5z" fill="#aaa" /></svg></button>
        </div>
        <nav class="menu channel-menu">
          <button v-for="m in channelMenu" :key="m" type="button">{{ m }}</button>
        </nav>
        <div class="channel-box"></div>
        <span class="hsplit"></span>
        <div class="layer-tabs">
          <button v-for="t in layerTabs" :key="t" type="button" :class="{ on: t === activeLayer }" @click="activeLayer = t">{{ t }}</button>
        </div>
        <div class="layer-frame">
          <nav class="menu layer-menu">
            <button v-for="m in layerMenu" :key="m" type="button">{{ m }}</button>
          </nav>
          <div class="layer-icons">
            <button v-for="n in layerIcons" :key="n" type="button" :aria-label="n"><svg><use :href="'#' + n" /></svg></button>
          </div>
          <div class="layer-list">
            <div class="scrollbar">
              <button type="button" aria-label="向左"><i class="left"></i></button>
              <span class="track"><span class="thumb"></span></span>
              <button type="button" aria-label="向左滚动"><i class="left"></i></button>
              <button type="button" aria-label="向右滚动"><i class="right"></i></button>
            </div>
          </div>
        </div>
      </aside>
    </main>

    <section class="bar time-bar">
      <span class="grip"></span>
      <div class="ruler">
        <span class="now">1</span>
        <span v-for="f in frames" :key="f" class="mark">{{ f }}</span>
      </div>
      <input v-model="current" class="num" aria-label="当前时间" />
      <div class="playback">
        <button v-for="n in playIcons" :key="n" type="button" :aria-label="n"><svg><use :href="'#' + n" /></svg></button>
      </div>
    </section>

    <section class="bar range-bar">
      <span class="grip"></span>
      <input v-model="animStart" class="num" aria-label="动画开始时间" />
      <input v-model="playStart" class="num" aria-label="播放开始时间" />
      <div class="range-track">
        <div class="range-span">
          <button type="button" aria-label="范围开始"></button><span>1</span>
          <span class="end">120</span><button type="button" aria-label="范围结束"></button>
        </div>
      </div>
      <input v-model="playEnd" class="num" aria-label="播放结束时间" />
      <input v-model="animEnd" class="num" aria-label="动画结束时间" />
      <button type="button" class="drop" aria-label="选择动画层"><i class="hollow-tri"></i></button>
      <input v-model="animLayer" class="flat-field" aria-label="动画层" />
      <button type="button" class="drop" aria-label="选择角色集"><i class="hollow-tri"></i></button>
      <input v-model="charSet" class="flat-field" aria-label="角色集" />
      <button type="button" class="end-icon" aria-label="自动关键帧"><svg viewBox="0 0 16 16"><circle cx="4" cy="8" r="2" fill="none" stroke="#bbb" stroke-width="1.500" /><path d="M6 8h9v3M12 8v3" fill="none" stroke="#bbb" stroke-width="1.500" /></svg></button>
      <button type="button" class="end-icon" aria-label="动画首选项"><svg viewBox="0 0 16 16"><use href="#win" width="16" height="16" /><path d="M3 13l3-4 2-3 1 4 4-3M4 7l8 6M3 9h8" fill="none" stroke="#c9303a" stroke-width="1.500" /></svg></button>
    </section>

    <section class="bar command-bar">
      <span class="grip"></span>
      <label for="mel">MEL</label>
      <input id="mel" v-model="command" class="command" />
      <output class="result" aria-label="命令结果"></output>
      <button type="button" class="end-icon" aria-label="脚本编辑器"><svg viewBox="0 0 16 16"><use href="#win" width="16" height="16" /><path d="M3 5h10v4H3z" fill="#777" stroke="#222" /><path d="M3 10h10v3H3z" fill="#ccc" stroke="#222" /></svg></button>
    </section>

    <footer class="help-line">
      <span class="grip"></span>
      <div class="help-box"><svg class="sizer" viewBox="0 0 14 14"><path d="M0 14 14 0M4 14 14 4M8 14l6-6" stroke="#222" stroke-width="1.500" /><path d="M2 14 14 2M6 14l8-8M10 14l4-4" stroke="#777" /></svg></div>
    </footer>

    <svg class="watermark" viewBox="0 0 560 340">
      <text x="280" y="190" text-anchor="middle" transform="rotate(-30 280 170)">微信公众号：管家插件</text>
    </svg>
    <svg class="callout" viewBox="0 0 160 200" aria-hidden="true">
      <path d="M20 16 118 120l7-4 2 25-24-11 8-4z" fill="#fb3a3a" />
      <path d="M135 145h24v33h-24z" fill="none" stroke="#fb3a3a" stroke-width="3" />
    </svg>
  </div>
</template>

<style>
body { background: #444; }
</style>

<style scoped>
.app {
  position: relative;
  display: flex;
  flex-direction: column;
  min-height: 100vh;
  overflow: hidden;
  background: #444;
  color: #c8c8c8;
  font: 12px/16px "Noto Sans", "Noto Sans CJK SC", sans-serif;
}
.app *, .app *::before, .app *::after { box-sizing: border-box; }
.defs { position: absolute; }
button, input, select { font: inherit; color: inherit; margin: 0; padding: 0; border: 0; background: none; border-radius: 0; }
button { display: flex; align-items: center; justify-content: center; flex: none; white-space: nowrap; }
input { min-width: 0; outline: 0; }
h1, h2 { margin: 0; font-weight: 400; }

.titlebar { display: flex; align-items: center; height: 36px; padding-left: 8px; background: #fff; color: #000; }
.title-logo { width: 20px; height: 20px; margin-right: 5px; }
.titlebar h1 { font: 16px/22px "Open Sans", "Noto Sans CJK SC", sans-serif; }
.win-buttons { display: flex; margin-left: auto; }
.win-buttons button { width: 58px; height: 34px; }
.win-buttons svg { width: 12px; height: 12px; overflow: visible; fill: none; stroke: #000; }

.menu { display: flex; gap: 15px; padding-top: 2px; }
.main-menu { height: 20px; padding-left: 8px; border-bottom: 1px solid #2b2b2b; }

.grip {
  flex: none;
  width: 12px;
  align-self: stretch;
  margin: 4px 0;
  background:
    radial-gradient(circle at 7px 1px, #777 0 1px, transparent 1px) 0 0 / 12px 6px,
    radial-gradient(circle at 10px 4px, #777 0 1px, transparent 1px) 0 0 / 12px 6px;
}
.hgrip {
  height: 6px;
  background:
    radial-gradient(circle at 1px 1px, #777 0 1px, transparent 1px) 0 0 / 6px 6px,
    radial-gradient(circle at 4px 4px, #777 0 1px, transparent 1px) 0 0 / 6px 6px;
}
.sep { flex: none; position: relative; width: 11px; height: 24px; }
.sep::before { content: ""; position: absolute; left: 5px; top: 0; width: 2px; height: 100%; border-left: 1px solid #1e1e1e; border-right: 1px solid #5c5c5c; }
.sep::after { content: ""; position: absolute; left: 4px; top: 8px; width: 4px; height: 8px; border: 1px solid #888; border-radius: 2px; background: #444; }
.more { flex: none; position: relative; width: 11px; height: 24px; }
.more::before { content: ""; position: absolute; left: 4px; top: 0; width: 1px; height: 100%; background: #1e1e1e; }
.more::after { content: ""; position: absolute; left: 5px; top: 8px; border-left: 5px solid #888; border-top: 4px solid transparent; border-bottom: 4px solid transparent; }

.status-line { display: flex; align-items: center; height: 33px; border-bottom: 1px solid #303030; }
.mode { position: relative; align-self: flex-start; margin-top: 4px; }
.mode select { display: block; width: 98px; height: 20px; padding-left: 3px; appearance: none; border: 1px solid #2b2b2b; border-radius: 2px; background: linear-gradient(#626262, #505050); }
.mode::after { content: ""; position: absolute; right: 4px; top: 7px; border-top: 5px solid #ddd; border-left: 4px solid transparent; border-right: 4px solid transparent; pointer-events: none; }
.mode::before { content: ""; position: absolute; right: 15px; top: 1px; width: 1px; height: 18px; background: #333; }
.icons { display: flex; }
.icons button { width: 26px; height: 26px; border: 1px solid transparent; border-radius: 3px; }
.icons.wide button { width: 27px; }
.icons svg { width: 24px; height: 24px; }
.icons .on { background: #5f5f5f; border-color: #2a2a2a; }
.icons.right { margin-left: auto; }
.flat-field { height: 25px; padding: 0 3px; border: 1px solid #4c4c4c; border-radius: 2px; background: #404040; color: #ccc; }
.surface { width: 99px; }

.shelf { display: flex; height: 73px; border-bottom: 1px solid #2b2b2b; }
.shelf-side { display: flex; flex-direction: column; justify-content: flex-end; width: 22px; margin: 3px 0 2px 1px; border: 1px solid #2b2b2b; border-right-color: #888; }
.shelf-side button { height: 17px; }
.shelf-side button + button { border-top: 1px solid #aaa; }
.square { width: 13px; height: 9px; border-radius: 1px; background: #858585; }
.hollow-tri { width: 10px; height: 6px; background: #777; clip-path: polygon(0 0, 100% 0, 50% 100%); }
.hollow-tri.small { width: 6px; height: 4px; }
.shelf-main { flex: 1; min-width: 0; margin-left: 2px; }
.tab-row { display: flex; align-items: flex-end; height: 25px; border-bottom: 1px solid #2b2b2b; }
.tab-row button { height: 18px; padding: 2px 15px 0 14px; border-top: 1px solid #2b2b2b; border-right: 1px solid #2b2b2b; background: linear-gradient(#4a4a4a, #404040); }
.tab-row button.latin { padding: 2px 13px 0; }
.tab-row button:first-child { border-left: 1px solid #2b2b2b; padding: 2px 14px 0; border-radius: 3px 0 0 0; }
.tab-row .on { height: 21px; padding-top: 4px; border-radius: 3px 3px 0 0; background: #5e5e5e; border-color: #707070; }
.tab-row .trash { margin-left: auto; padding: 0 3px 0 0; height: 20px; border: 0; background: none; }
.trash svg { width: 14px; height: 17px; }
.shelf-body { display: flex; align-items: center; height: 41px; margin: 2px 3px 0 1px; padding-left: 3px; border: 1px solid #2b2b2b; border-radius: 3px; }
.shelf-body button { width: 35px; }
.shelf-body svg { width: 32px; height: 32px; margin-bottom: 2px; }

.workspace { display: flex; flex: 1; min-height: 0; padding: 2px 0; }
.toolbox { display: flex; flex-direction: column; width: 45px; padding: 0 4px 5px 2px; }
.toolbox .hgrip { margin: 6px 2px 0; }
.tool-frame { flex: 1; display: flex; flex-direction: column; align-items: flex-start; padding: 1px 0 0 1px; border: 1px solid #2e2e2e; border-right-color: #666; border-bottom-color: #777; border-top: 0; }
.tool { width: 34px; height: 34px; margin-bottom: 3px; border: 1px solid #646464; border-radius: 2px; outline: 1px solid #2f2f2f; }
.tool svg { width: 32px; height: 32px; }
.tool.on { background: #a0a0a0; border-color: #b0b0b0; }
.last-tool { margin: 35px 0 14px; }
.layout { width: 34px; height: 34px; margin-bottom: 4px; background: #2c2c2c; border-radius: 2px; }
.layout svg { width: 34px; height: 34px; }
.layout-menu { width: 32px; height: 32px; border: 1px solid #666; border-color: #666 #2e2e2e #2e2e2e #666; }
.maya-badge { position: relative; width: 32px; height: 32px; margin: 2px 0 0 3px; }
.maya-badge svg { display: block; width: 32px; height: 32px; }
.maya-badge span { position: absolute; right: 1px; bottom: 0; color: #444; font: 7px/8px "Liberation Sans", sans-serif; }

.view-panel { flex: 1; min-width: 0; display: flex; flex-direction: column; border: 1px solid #8a8a8a; }
.panel-menu { height: 20px; padding-left: 8px; }
.panel-tools { display: flex; align-items: center; height: 20px; padding-bottom: 2px; }
.panel-tools .sep { height: 16px; }
.panel-tools .sep:first-child { width: 10px; }
.panel-tools .sep::after { top: 4px; }
.panel-tools button { width: 20px; height: 18px; border-radius: 2px; }
.panel-tools svg { width: 20px; height: 20px; }
.panel-tools .on { background: #303030; box-shadow: inset 0 0 0 1px #5a5a5a; }
.viewport { position: relative; flex: 1; min-height: 0; background: linear-gradient(#7d91a9, #18191b); }
.scene { position: absolute; inset: 0; width: 100%; height: 100%; }
.grid-lines { fill: none; stroke: #7c7c7c; shape-rendering: crispEdges; }
.axis-lines { fill: none; stroke: #000; shape-rendering: crispEdges; }
.cam-name { font: bold 11px "Liberation Mono", monospace; fill: #0a4a1e; }
.axis-mark { position: absolute; left: 8px; bottom: 15px; width: 34px; height: 34px; font: bold 11px "Liberation Mono", monospace; }
.view-cube { position: absolute; top: 0; right: 0; width: 100px; height: 100px; }
.cube-text { font: 20px "Noto Sans CJK SC", sans-serif; fill: #5a5a5a; }
.cube-text .top-face { font-size: 16px; }

.splitter { flex: none; width: 10px; background: radial-gradient(circle at 5px 1px, #2b2b2b 0 1px, transparent 1px) 0 218px / 10px 6px; clip-path: inset(218px 0 220px); }
.side { display: flex; flex-direction: column; width: 224px; }
.side-title { display: flex; align-items: center; height: 18px; }
.side-title h2 { margin: 0 10px; font-size: 10px; line-height: 16px; white-space: nowrap; }
.side-title .hgrip { flex: 1; }
.side-title button { width: 14px; height: 14px; margin-left: 2px; border: 1px solid #222; border-radius: 2px; outline: 1px solid #666; outline-offset: -2px; }
.side-title svg { width: 12px; height: 12px; fill: none; stroke: #000; }
.side-icons { display: flex; align-items: center; justify-content: flex-end; height: 24px; }
.side-icons button { width: 21px; }
.side-icons svg { width: 18px; height: 18px; }
.channel-menu { height: 22px; padding-left: 6px; }
.channel-box { flex: 1; border: 1px solid #6a6a6a; border-radius: 1px; background: #2b2b2b; box-shadow: inset 0 0 0 1px #222; }
.hsplit { height: 10px; width: 74px; align-self: center; background: radial-gradient(circle at 2px 5px, #777 0 1px, transparent 1px) 0 0 / 6px 10px; }
.layer-tabs { display: flex; align-items: flex-end; height: 23px; border-bottom: 1px solid #2b2b2b; }
.layer-tabs button { width: 54px; height: 19px; padding-top: 2px; border: 1px solid #2b2b2b; border-left: 0; border-bottom: 0; background: #484848; }
.layer-tabs .on { width: 53px; height: 21px; padding-top: 3px; border-color: #777; border-radius: 2px 2px 0 0; background: #5e5e5e; }
.layer-frame { padding: 0 3px 6px; border: 1px solid #2b2b2b; border-top: 0; border-right: 0; }
.layer-menu { height: 24px; padding: 0 0 0 6px; }
.layer-icons { display: flex; justify-content: flex-end; height: 24px; }
.layer-icons button { width: 25px; height: 20px; }
.layer-icons svg { width: 20px; height: 20px; }
.layer-list { display: flex; flex-direction: column; justify-content: flex-end; height: 98px; padding: 1px 1px 0; border: 1px solid #222; border-radius: 2px; background: #2b2b2b; }
.scrollbar { display: flex; height: 16px; gap: 1px; }
.scrollbar button { width: 15px; background: #5a5a5a; border: 1px solid #333; }
.scrollbar i { border: 4px solid transparent; }
.scrollbar .left { border-right: 5px solid #ddd; border-left: 0; }
.scrollbar .right { border-left: 5px solid #ddd; border-right: 0; }
.track { flex: 1; background: conic-gradient(#2b2b2b 25%, #404040 0 50%, #2b2b2b 0 75%, #404040 0) 0 0 / 2px 2px; }
.thumb { display: flex; align-items: center; justify-content: center; width: 60%; height: 16px; background: #5e5e5e; border: 1px solid #444; }
.thumb::after { content: ""; width: 20px; height: 12px; background: radial-gradient(circle at 2px 2px, #222 0 1px, transparent 1px) 0 0 / 4px 4px; }

.bar { display: flex; align-items: center; border-top: 1px solid #2b2b2b; }
.time-bar { height: 36px; }
.ruler { flex: 1; display: grid; grid-template-columns: 38px repeat(23, minmax(0, 1fr)) 12px; height: 30px; margin-bottom: 3px; background: #262626; border-bottom: 1px solid #666; color: #838383; }
.mark { position: relative; padding-left: 1px; line-height: 16px; white-space: nowrap; }
.mark:last-child { overflow-x: clip; }
.mark::after { content: ""; position: absolute; left: 0; bottom: 0; width: 2px; height: 14px; background: #777; }
.now { display: flex; align-items: flex-end; width: 7px; height: 29px; margin-left: 7px; background: #555; color: #f0f0f0; }
.num { flex: none; width: 69px; height: 21px; padding: 0 3px; border: 1px solid #505050; border-radius: 2px; background: #2b2b2b; color: #d0d0d0; }
.time-bar .num { margin: 0 0 2px 4px; height: 20px; }
.playback { display: flex; justify-content: space-between; width: 218px; margin: 0 3px 0 6px; }
.playback button { width: 24px; }
.playback svg { width: 20px; height: 20px; }

.range-bar { height: 30px; }
.range-bar .num + .num { margin-left: 3px; }
.range-track { flex: 1; height: 22px; margin: 0 3px 0 4px; padding: 3px 4px 2px; border-right: 1px solid #666; border-bottom: 1px solid #666; background: #262626; }
.range-span { display: flex; align-items: center; gap: 3px; width: 61%; height: 16px; padding: 0 4px; background: #666; }
.range-span .end { margin-left: auto; }
.range-span button { width: 11px; height: 12px; border-right: 1px solid #222; border-bottom: 1px solid #222; }
.drop { width: 22px; }
.range-bar .flat-field { width: 102px; height: 23px; }
.end-icon { width: 20px; }
.end-icon svg { width: 16px; height: 16px; }

.command-bar { height: 30px; }
.command-bar label { width: 46px; padding-left: 11px; }
.command, .result { flex: 1; height: 25px; border: 1px solid #555; border-radius: 2px; background: #2b2b2b; }
.command { text-indent: 4px; }
.result { margin-left: 6px; border-color: #222; background: #000; }

.help-line { display: flex; height: 24px; border-top: 1px solid #2b2b2b; }
.help-box { position: relative; flex: 1; margin-top: 2px; border: 1px solid #2b2b2b; border-width: 1px 0 0 1px; }
.sizer { position: absolute; right: 0; bottom: 0; width: 14px; height: 14px; }

.watermark { position: absolute; left: 373px; top: 8px; width: 560px; height: 340px; overflow: visible; opacity: .85; pointer-events: none; }
.watermark text { font: 300 56px "Noto Sans CJK SC", sans-serif; fill: #b4b6b8; stroke: #b4b6b8; stroke-width: 2px; stroke-linejoin: round; }
.callout { position: absolute; right: 0; bottom: 0; width: 160px; height: 200px; pointer-events: none; }
</style>
